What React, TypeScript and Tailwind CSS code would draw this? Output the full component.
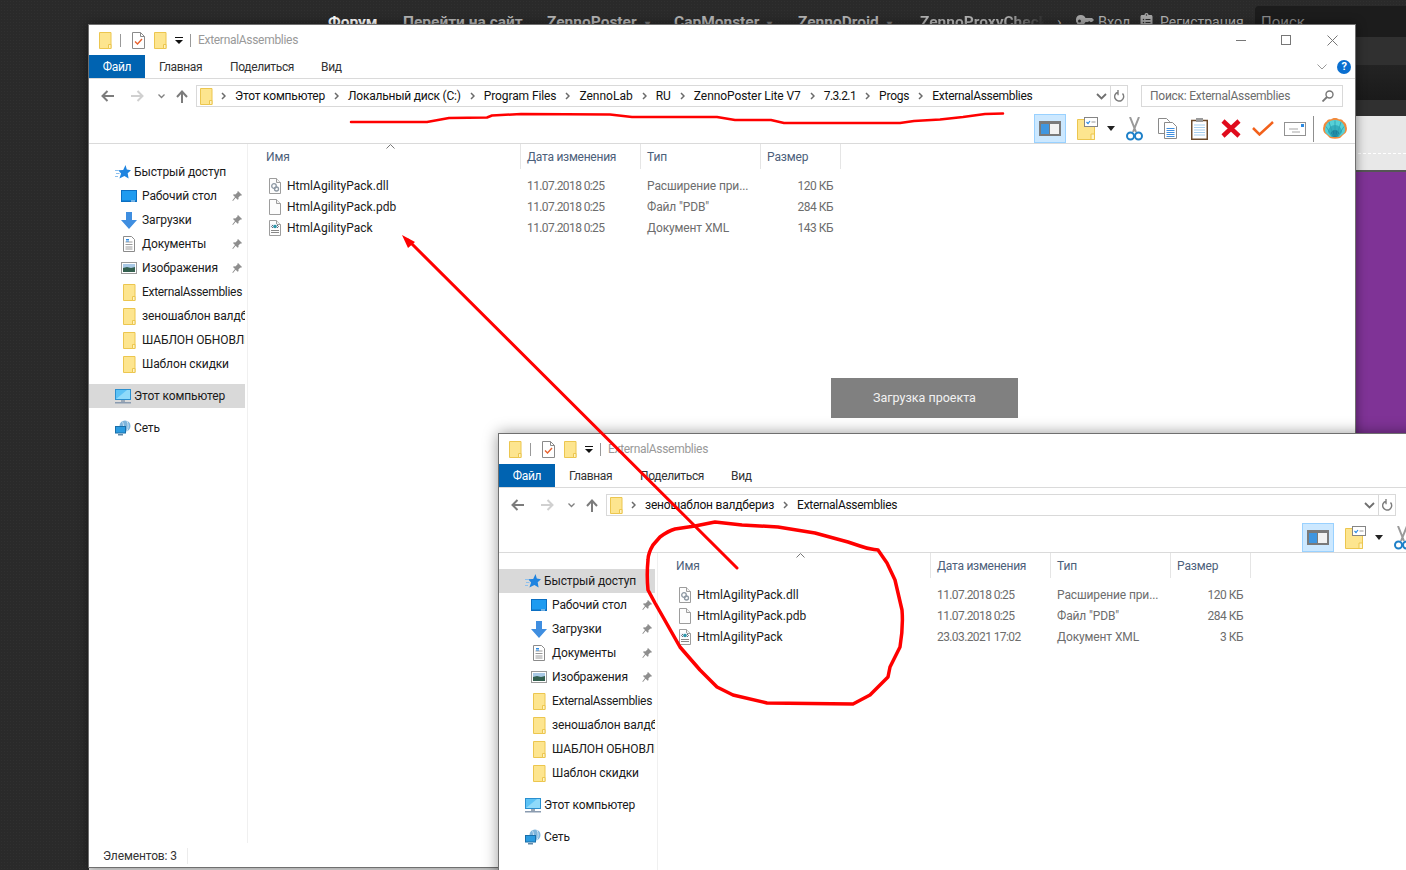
import { FaClipboardList } from "react-icons/fa";

type FileRow = { name: string; kind: "dll" | "pdb" | "xml"; date: string; type: string; size: string };

const filesOld: FileRow[] = [
  { name: "HtmlAgilityPack.dll", kind: "dll", date: "11.07.2018 0:25", type: "Расширение при...", size: "120 КБ" },
  { name: "HtmlAgilityPack.pdb", kind: "pdb", date: "11.07.2018 0:25", type: 'Файл "PDB"', size: "284 КБ" },
  { name: "HtmlAgilityPack", kind: "xml", date: "11.07.2018 0:25", type: "Документ XML", size: "143 КБ" },
];

const filesNew: FileRow[] = [
  { name: "HtmlAgilityPack.dll", kind: "dll", date: "11.07.2018 0:25", type: "Расширение при...", size: "120 КБ" },
  { name: "HtmlAgilityPack.pdb", kind: "pdb", date: "11.07.2018 0:25", type: 'Файл "PDB"', size: "284 КБ" },
  { name: "HtmlAgilityPack", kind: "xml", date: "23.03.2021 17:02", type: "Документ XML", size: "3 КБ" },
];

const crumbsOld = [
  { label: "Этот компьютер", cls: "tracking-[-0.2px]" },
  { label: "Локальный диск (C:)", cls: "tracking-[-0.22px]" },
  { label: "Program Files", cls: "tracking-[-0.1px]" },
  { label: "ZennoLab", cls: "tracking-[0px]" },
  { label: "RU", cls: "tracking-[0px]" },
  { label: "ZennoPoster Lite V7", cls: "tracking-[-0.08px]" },
  { label: "7.3.2.1", cls: "tracking-[-0.6px]" },
  { label: "Progs", cls: "tracking-[-0.2px]" },
  { label: "ExternalAssemblies", cls: "tracking-[-0.3px]" },
];

const crumbsNew = [
  { label: "зеношаблон валдбериз", cls: "tracking-[-0.2px]" },
  { label: "ExternalAssemblies", cls: "tracking-[-0.3px]" },
];

const siteNav = [
  { label: "Форум", cls: "w-[75px] text-white" },
  { label: "Перейти на сайт", cls: "w-[144px]" },
  { label: "ZennoPoster", cls: "w-[127px]", caret: true },
  { label: "CapMonster", cls: "w-[124px]", caret: true },
  { label: "ZennoDroid", cls: "w-[122px]", caret: true },
];

function FolderIcon({ className = "" }: { className?: string }) {
  return (
    <svg className={className} width="13" height="17" viewBox="0 0 13 17">
      <path d="M.5.5h11.500v16H.5z" fill="#fde58f" stroke="#ecc64f" />
      <path d="M9.500 12.500h2.500v4h-2.500z" fill="#fff3c4" stroke="#ecc64f" />
    </svg>
  );
}

function PropsIcon() {
  return (
    <svg width="13" height="17" viewBox="0 0 13 17">
      <path d="M.5.5h8l4 4v12H.5z" fill="#fff" stroke="#8a8a8a" />
      <path d="M8.500.5v4h4" fill="none" stroke="#8a8a8a" />
      <path d="M3 9.500l2.500 2.500L10 7" fill="none" stroke="#e8602c" strokeWidth="1.400" />
    </svg>
  );
}

function StarIcon() {
  return (
    <svg width="16" height="15" viewBox="0 0 16 15">
      <path d="M10.500 0l1.300 4.600 4.200.6-3.300 3 .9 5.300-4.200-2.600-5 2.600 1.700-5L3.200 5.200l5-.3z" fill="#1f84e0" />
      <path d="M0 5.500h3.500M1 8.500h3.500M0 11.500h3" stroke="#8cc0ee" strokeWidth="1" />
    </svg>
  );
}

function DesktopIcon() {
  return (
    <svg width="16" height="12" viewBox="0 0 16 12">
      <rect width="16" height="12" fill="#0b6fc2" />
      <rect x="1" y="1" width="14" height="9.500" fill="#1e9bf0" />
      <rect x="10" y="10.500" width="4" height="1" fill="#cfe8fb" />
    </svg>
  );
}

function DownloadIcon() {
  return (
    <svg width="16" height="17" viewBox="0 0 16 17">
      <path d="M5 0h6v8h5l-8 9-8-9h5z" fill="#3f8ee0" />
    </svg>
  );
}

function DocsIcon() {
  return (
    <svg width="12" height="16" viewBox="0 0 12 16">
      <path d="M.5.5h8l3 3v12H.5z" fill="#fff" stroke="#8b8b8b" />
      <path d="M2.500 6h7M2.500 8.500h7M2.500 11h7M2.500 13h7" stroke="#9a9a9a" />
      <path d="M3 3.500h3M3 5h3" stroke="#2b8ae2" />
    </svg>
  );
}

function PicturesIcon() {
  return (
    <svg width="16" height="12" viewBox="0 0 16 12">
      <rect x=".5" y=".5" width="15" height="11" fill="#fff" stroke="#9a9a9a" />
      <rect x="2" y="2" width="12" height="4" fill="#a9c9e6" />
      <path d="M2 6l4-1 4 1 4-1v5H2z" fill="#33604f" />
    </svg>
  );
}

function ComputerIcon() {
  return (
    <svg width="16" height="15" viewBox="0 0 16 15">
      <rect x=".5" y=".5" width="15" height="10" fill="#5cc2f5" stroke="#2a8fcf" />
      <path d="M1 10L12 1h3v9z" fill="#8fdafa" />
      <rect x="6" y="11" width="4" height="2" fill="#9aa7b5" />
      <rect y="13" width="16" height="1.500" fill="#8a9bb0" />
    </svg>
  );
}

function NetworkIcon() {
  return (
    <svg width="16" height="16" viewBox="0 0 16 16">
      <circle cx="10" cy="6" r="5.500" fill="#7eb5dc" />
      <path d="M7 1.500c2 2 2 7 0 9M12 1c1.500 3 1.500 7 0 10" stroke="#cfe4f4" fill="none" />
      <rect x=".5" y="6.500" width="10" height="6.500" fill="#2b9be0" stroke="#1a6ea8" />
      <rect x="3" y="14" width="5" height="1.500" fill="#5f88a8" />
    </svg>
  );
}

function PinIcon() {
  return (
    <svg width="10" height="11" viewBox="0 0 10 11">
      <path d="M6 0l4 4-1 .7-.6-.3L6.400 6.600 6.600 8 5.700 8.800 3.600 6.700 1 10 .3 9.400 3 6.100 1 4.100 1.900 3.300 3.300 3.500 5.500 1.500 5.400.8z" fill="#8e8e8e" />
    </svg>
  );
}

function KeyIcon() {
  return (
    <svg className="mt-[1px] shrink-0" width="18" height="12" viewBox="0 0 18 12">
      <path d="M5 0a5 5 0 1 0 4.500 7H12l1.200-1 1.200 1H16l2-2-2-2H9.500A5 5 0 0 0 5 0zM3.500 4.500a1.500 1.500 0 1 1 0 3 1.500 1.500 0 0 1 0-3z" fill="#a8a8a8" />
    </svg>
  );
}

function FileIcon({ kind }: { kind: FileRow["kind"] }) {
  return (
    <svg width="14" height="16" viewBox="0 0 14 16">
      <path d="M1.500.5h7l4 4v11h-11z" fill="#fdfdfd" stroke="#9d9d9d" />
      <path d="M8.500.5v4h4" fill="#f2f2f2" stroke="#9d9d9d" />
      {kind === "dll" && (
        <g fill="none" stroke="#8d98a3" strokeWidth="1.300">
          <circle cx="6" cy="8" r="2.300" />
          <circle cx="8.500" cy="11" r="2" />
        </g>
      )}
      {kind === "xml" && (
        <g>
          <path d="M2 4h7v4H2z" fill="#eef4fa" />
          <circle cx="7" cy="6.500" r="1.800" fill="#2b95a8" />
          <path d="M3.500 6.500L5 5M3.500 6.500L5 8M10.500 6.500L9 5M10.500 6.500L9 8" stroke="#667" />
          <path d="M3 10.500h8M3 12.500h8" stroke="#888" />
        </g>
      )}
    </svg>
  );
}

function BackArrow({ color, flip = false }: { color: string; flip?: boolean }) {
  return (
    <svg className={flip ? "rotate-180" : ""} width="13" height="12" viewBox="0 0 13 12">
      <path d="M13 6H2M6.500 1L1.500 6l5 5" fill="none" stroke={color} strokeWidth="2" />
    </svg>
  );
}

function Chevron() {
  return (
    <svg className="shrink-0" width="5" height="8" viewBox="0 0 5 8">
      <path d="M1 1l3 3-3 3" fill="none" stroke="#6b6b6b" strokeWidth="1.500" />
    </svg>
  );
}

function ToolbarIcons() {
  return (
    <div className="flex items-center h-full pt-[6px] pr-[8px]">
      <div className="flex items-center justify-center w-[32px] h-[29px] bg-[#cce8ff] border border-[#99d1ff]">
        <svg width="22" height="15" viewBox="0 0 22 15">
          <rect width="22" height="15" fill="#7a7a7a" />
          <rect x="2" y="3" width="8" height="10" fill="#3f96e0" />
          <rect x="11" y="3" width="9" height="10" fill="#f2f2f2" />
        </svg>
      </div>
      <svg className="ml-[11px]" width="21" height="23" viewBox="0 0 21 23">
        <path d="M.5 2.500h17v20H.5z" fill="#fde58f" stroke="#ecc64f" />
        <path d="M14 17h3.500v5.500H14z" fill="#fff3c4" stroke="#ecc64f" />
        <rect x="7.500" y=".5" width="13" height="9" fill="#fff" stroke="#858585" />
        <path d="M9.500 5l1.500 1.500L13 4" fill="none" stroke="#2b8ae2" strokeWidth="1.200" />
        <path d="M14.500 5h4" stroke="#999" />
      </svg>
      <svg className="ml-[9px]" width="8" height="5" viewBox="0 0 8 5">
        <path d="M0 0h8L4 5z" fill="#222" />
      </svg>
      <svg className="ml-[11px]" width="17" height="24" viewBox="0 0 17 24">
        <path d="M4 0l6 15M13 0L7 15" stroke="#9a9a9a" strokeWidth="2" fill="none" />
        <circle cx="4.500" cy="19" r="3.500" fill="none" stroke="#1e80c8" strokeWidth="2" />
        <circle cx="12.500" cy="19" r="3.500" fill="none" stroke="#1e80c8" strokeWidth="2" />
      </svg>
      <svg className="ml-[15px]" width="19" height="21" viewBox="0 0 19 21">
        <path d="M.5.5h8l3 3v12H.5z" fill="#fff" stroke="#8a8a8a" />
        <path d="M6.500 4.500h8l4 4v12h-12z" fill="#fff" stroke="#8a8a8a" />
        <path d="M8.500 10.500h8M8.500 12.500h8M8.500 14.500h8M8.500 16.500h8M8.500 18.500h8" stroke="#3f8fe0" />
      </svg>
      <svg className="ml-[14px]" width="17" height="22" viewBox="0 0 17 22">
        <rect x=".75" y="2.500" width="15.500" height="18.750" fill="#fff" stroke="#6b4a2b" strokeWidth="1.500" />
        <rect x="5" y="0" width="7" height="4" fill="#9a9a9a" />
        <path d="M3 7h11M3 9.500h11M3 12h11M3 14.500h11M3 17h11" stroke="#a6cfee" />
      </svg>
      <svg className="ml-[13px]" width="20" height="19" viewBox="0 0 20 19">
        <path d="M2 2l16 15M18 2L2 17" stroke="#e00b1c" strokeWidth="4.500" />
      </svg>
      <svg className="ml-[11px]" width="22" height="15" viewBox="0 0 22 15">
        <path d="M1 7l6.500 6.500L21 1" fill="none" stroke="#f2611b" strokeWidth="2.500" />
      </svg>
      <svg className="ml-[10px]" width="22" height="14" viewBox="0 0 22 14">
        <rect x=".5" y=".5" width="21" height="13" fill="#fff" stroke="#929292" />
        <rect x="17" y="2" width="3" height="3" fill="#2b8ae2" />
        <path d="M5 7h9M8 10h8" stroke="#a5a5a5" />
      </svg>
      <div className="ml-[7px] w-px h-[26px] bg-[#8f8f8f]" />
      <svg className="ml-[9px]" width="24" height="21" viewBox="0 0 24 21">
        <path d="M12 0c-2 0-3 .5-4 1.500C6 1 4.500 2 3.500 3.500 1.500 4.500.5 6.500.5 8.500-.3 10.500 0 13 1.500 15L4 17l3 3c3 1 7 1 10 0l3-3 2.500-2c1.500-2 1.800-4.500 1-6.500 0-2-1-4-3-5C19.500 2 18 1 16 1.500 15 .5 14 0 12 0z" fill="#f08a3c" />
        <path d="M12 2C6 2 2 6 2 12c0 2 1 3 2 4l4 3h8l4-3c1-1 2-2 2-4 0-6-4-10-10-10z" fill="#56d0d6" />
        <path d="M12 7c-3.500 0-7 3-7 7l3.500 5h7l3.500-5c0-4-3.500-7-7-7z" fill="#35aebd" />
        <path d="M12 12c-2 0-4 1.500-4 3l2 4h4l2-4c0-1.500-2-3-4-3z" fill="#1c7f9d" />
        <path d="M12 18.500V2.500M10.500 18.500L6 4M13.500 18.500L18 4M9 18L3 8.500M15 18L21 8.500" stroke="#2a9fb0" strokeWidth=".8" />
      </svg>
    </div>
  );
}

function NavRow({
  icon,
  label,
  quick = false,
  pin = false,
  active = false,
}: {
  icon: React.ReactNode;
  label: string;
  quick?: boolean;
  pin?: boolean;
  active?: boolean;
}) {
  return (
    <div
      className={`flex items-center h-[24px] w-[156px] whitespace-nowrap overflow-hidden text-[#1a1a1a] ${
        active ? "bg-[#d9d9d9]" : ""
      } ${quick ? "pl-[26px]" : "pl-[32px]"}`}
    >
      <span className={`flex items-center justify-center shrink-0 w-[16px] ${quick ? "mr-[3px]" : "mr-[5px]"}`}>{icon}</span>
      <span className={label === "ExternalAssemblies" ? "tracking-[-0.3px]" : ""}>{label}</span>
      {pin && (
        <span className="ml-auto mr-[3px]">
          <PinIcon />
        </span>
      )}
    </div>
  );
}

function Explorer({
  className,
  crumbs,
  files,
  activeRow,
  status,
}: {
  className: string;
  crumbs: { label: string; cls: string }[];
  files: FileRow[];
  activeRow: "quick" | "pc";
  status?: string;
}) {
  return (
    <div className={`absolute flex flex-col bg-white border border-[#6f6f6f] text-[12px] leading-none tracking-[-0.12px] ${className}`}>
      {/* title bar */}
      <div className="flex items-center h-[30px] shrink-0 pl-[10px]">
        <FolderIcon />
        <div className="w-px h-[13px] bg-[#999] ml-[8px] mr-[11px]" />
        <PropsIcon />
        <FolderIcon className="ml-[9px]" />
        <svg className="ml-[8px]" width="8" height="7" viewBox="0 0 8 7">
          <path d="M0 .5h8" stroke="#111" />
          <path d="M0 3h8L4 7z" fill="#111" />
        </svg>
        <div className="w-px h-[13px] bg-[#999] ml-[7px] mr-[7px]" />
        <span className="text-[#999] tracking-[-0.3px]">ExternalAssemblies</span>
        <div className="ml-auto flex items-center pr-[17px]">
          <div className="w-[10px] h-px bg-[#777]" />
          <div className="w-[10px] h-[10px] border border-[#777] ml-[35px]" />
          <svg className="ml-[36px]" width="11" height="11" viewBox="0 0 11 11">
            <path d="M.5.5l10 10M10.500.5l-10 10" stroke="#777" />
          </svg>
        </div>
      </div>
      {/* ribbon tabs */}
      <div className="flex items-stretch h-[24px] shrink-0 border-b border-[#dadada] text-[#333] tracking-[-0.35px]">
        <div className="flex items-center justify-center w-[56px] bg-[#0063b1] text-white">Файл</div>
        <div className="flex items-center ml-[14px] w-[71px]">Главная</div>
        <div className="flex items-center w-[91px]">Поделиться</div>
        <div className="flex items-center">Вид</div>
        <div className="ml-auto flex items-center pr-[4px]">
          <svg width="10" height="6" viewBox="0 0 10 6">
            <path d="M.5.5L5 5 9.500.5" fill="none" stroke="#999" />
          </svg>
          <div className="flex items-center justify-center w-[14px] h-[14px] rounded-full bg-[#0a6fd0] text-white font-bold ml-[10px] text-[11px]">?</div>
        </div>
      </div>
      {/* address row */}
      <div className="flex items-start h-[29px] shrink-0 pt-[6px] pl-[12px] pr-[12px]">
        <div className="flex items-center h-[22px]">
          <BackArrow color="#7c7c7c" />
          <span className="ml-[17px]">
            <BackArrow color="#d0d0d0" flip />
          </span>
          <svg className="ml-[14px]" width="7" height="5" viewBox="0 0 7 5">
            <path d="M.5.5l3 3 3-3" fill="none" stroke="#808080" strokeWidth="1.300" />
          </svg>
          <svg className="ml-[11px] mr-[8px]" width="12" height="13" viewBox="0 0 12 13">
            <path d="M6 13V2M1 7l5-5.500L11 7" fill="none" stroke="#7c7c7c" strokeWidth="2" />
          </svg>
        </div>
        <div className="flex items-stretch flex-1 min-w-0 h-[22px] border border-[#d9d9d9]">
          <div className="flex items-center flex-1 min-w-0 pl-[3px] text-[#111] whitespace-nowrap overflow-hidden">
            <FolderIcon className="mr-[8px]" />
            {crumbs.map((crumb) => (
              <span key={crumb.label} className="flex items-center">
                <Chevron />
                <span className={`ml-[9px] mr-[9px] ${crumb.cls}`}>{crumb.label}</span>
              </span>
            ))}
            <svg className="ml-auto mr-[3px] shrink-0" width="11" height="7" viewBox="0 0 11 7">
              <path d="M1 1l4.500 4.500L10 1" fill="none" stroke="#6f6f6f" strokeWidth="1.800" />
            </svg>
          </div>
          <div className="flex items-center justify-center w-[17px] border-l border-[#d9d9d9]">
            <svg width="11" height="12" viewBox="0 0 11 12">
              <path d="M8.500 3.500A4.500 4.500 0 1 1 4 2.200M4 0v4.500h-.5" fill="none" stroke="#7c7c7c" strokeWidth="1.400" />
            </svg>
          </div>
        </div>
        <div className="flex items-center shrink-0 w-[202px] h-[22px] ml-[13px] border border-[#d9d9d9] pl-[8px] pr-[8px] text-[#6d6d6d] tracking-[-0.25px]">
          <span>Поиск: ExternalAssemblies</span>
          <svg className="ml-auto" width="12" height="12" viewBox="0 0 12 12">
            <circle cx="7.500" cy="4.500" r="3.500" fill="none" stroke="#777" strokeWidth="1.400" />
            <path d="M5 7l-4.500 4.500" stroke="#777" strokeWidth="1.800" />
          </svg>
        </div>
      </div>
      {/* command bar */}
      <div className="flex justify-end h-[36px] shrink-0 border-b border-[#dadada]">
        <ToolbarIcons />
      </div>
      {/* body */}
      <div className="flex flex-1 min-h-0">
        <div className="w-[159px] shrink-0 border-r border-[#f0f0f0] pt-[16px]">
          <NavRow quick active={activeRow === "quick"} icon={<StarIcon />} label="Быстрый доступ" />
          <NavRow pin icon={<DesktopIcon />} label="Рабочий стол" />
          <NavRow pin icon={<DownloadIcon />} label="Загрузки" />
          <NavRow pin icon={<DocsIcon />} label="Документы" />
          <NavRow pin icon={<PicturesIcon />} label="Изображения" />
          <NavRow icon={<FolderIcon />} label="ExternalAssemblies" />
          <NavRow icon={<FolderIcon />} label="зеношаблон валдбериз" />
          <NavRow icon={<FolderIcon />} label="ШАБЛОН ОБНОВЛЕНИЕ" />
          <NavRow icon={<FolderIcon />} label="Шаблон скидки" />
          <div className="h-[8px]" />
          <NavRow quick active={activeRow === "pc"} icon={<ComputerIcon />} label="Этот компьютер" />
          <div className="h-[8px]" />
          <NavRow quick icon={<NetworkIcon />} label="Сеть" />
        </div>
        <div className="flex-1 min-w-0">
          <div className="grid grid-cols-[273px_120px_120px_80px] h-[25px] text-[#4c607a]">
            <div className="relative flex items-center pl-[18px] border-r border-[#e5e5e5]">
              Имя
              <svg className="absolute left-[138px] top-0" width="9" height="5" viewBox="0 0 9 5">
                <path d="M.5 4.500l4-4 4 4" fill="none" stroke="#777" />
              </svg>
            </div>
            <div className="flex items-center pl-[6px] border-r border-[#e5e5e5] tracking-[-0.25px]">Дата изменения</div>
            <div className="flex items-center pl-[6px] border-r border-[#e5e5e5]">Тип</div>
            <div className="flex items-center pl-[6px] border-r border-[#e5e5e5]">Размер</div>
          </div>
          <div className="mt-[6px]">
            {files.map((file) => (
              <div key={file.name} className="grid grid-cols-[273px_120px_120px_80px] h-[21px] items-center text-[#6d6d6d]">
                <div className="flex items-center pl-[20px] text-[#1a1a1a] tracking-[0.03px]">
                  <FileIcon kind={file.kind} />
                  <span className="ml-[5px]">{file.name}</span>
                </div>
                <div className="pl-[6px] tracking-[-0.6px]">{file.date}</div>
                <div className="pl-[6px]">{file.type}</div>
                <div className="text-right pr-[8px] tracking-[-0.5px]">{file.size}</div>
              </div>
            ))}
          </div>
        </div>
      </div>
      {status && (
        <div className="flex items-center h-[24px] shrink-0 pl-[14px] pt-[2px] text-[#333]">
          <span>{status}</span>
          <div className="w-px h-[16px] bg-[#ececec] ml-[10px]" />
        </div>
      )}
    </div>
  );
}

export default function App() {
  return (
    <div className="relative w-[1406px] h-[870px] overflow-hidden bg-[#2a2a2a] bg-[radial-gradient(#303030_1px,transparent_1px)] bg-[length:3px_3px] [font-family:Roboto,sans-serif]">
      {/* forum page behind the windows */}
      <div className="flex flex-col pl-[89px] h-full">
        <div className="flex h-[37px] shrink-0 pl-[239px]">
          <div className="flex items-start pt-[14px] text-[15.5px] font-bold leading-[17px] text-[#b4b4b4] whitespace-nowrap">
            {siteNav.map((item) => (
              <span key={item.label} className={item.cls}>
                {item.label}
                {item.caret && <span className="text-[#777] text-[10px] ml-[8px]">▾</span>}
              </span>
            ))}
            <span className="w-[125px] mr-[12px] overflow-hidden bg-gradient-to-r from-[#b4b4b4] from-70% to-transparent bg-clip-text text-transparent">ZennoProxyChecker</span>
            <span className="font-normal w-[19px]">›</span>
            <KeyIcon />
            <span className="font-normal ml-[4px] w-[42px] text-[14.5px]">Вход</span>
            <FaClipboardList className="mt-[-1px] w-[13px] text-[#a8a8a8]" size={16} />
            <span className="font-normal ml-[7px] w-[95px] text-[14px]">Регистрация</span>
          </div>
          <div className="ml-auto flex items-start w-[151px] h-[31px] mt-[6px] bg-[#1c1c1c] rounded-tl-[4px] pl-[6px] pt-[5px] text-[15px] text-[#8a8a8a]">Поиск</div>
        </div>
        <div className="h-[28px] shrink-0 bg-[#303030]" />
        <div className="h-[35px] shrink-0 bg-gradient-to-b from-[#232323] to-[#1a1a1a]" />
        <div className="h-[16px] shrink-0 bg-[#303030]" />
        <div className="flex items-end h-[54px] shrink-0 bg-[#e8e8e8] pb-[16px]">
          <div className="w-full border-t border-dashed border-white" />
        </div>
        <div className="h-[2px] shrink-0 bg-[#555]" />
        <div className="h-[261px] shrink-0 bg-[#7f3396]" />
        <div className="flex-1 bg-[#e6e6e6]" />
      </div>

      <Explorer
        className="left-[88px] top-[24px] w-[1268px] h-[844px] shadow-[0_0_10px_rgba(0,0,0,0.45)]"
        crumbs={crumbsOld}
        files={filesOld}
        activeRow="pc"
        status="Элементов: 3"
      />

      <div className="absolute left-[831px] top-[378px] flex items-center justify-center w-[187px] h-[40px] pt-[1px] bg-[#808080] text-[12.5px] text-[#f2f2f2]">
        Загрузка проекта
      </div>

      <Explorer
        className="left-[498px] top-[433px] w-[1126px] h-[500px] shadow-[0_0_14px_rgba(0,0,0,0.4)]"
        crumbs={crumbsNew}
        files={filesNew}
        activeRow="quick"
      />

      {/* hand-drawn red marks */}
      <svg className="absolute inset-0 pointer-events-none" width="1406" height="870" viewBox="0 0 1406 870" fill="none">
        <path
          d="M351 122L427 122L449 118L487 117.500L492 115.500L521 114L610 114.500L632 117L717 117L735 120L771 120L784 123L900 123L914 121L940 119.500L963 117L985 114L1003 113.500"
          stroke="#ff0000"
          strokeWidth="2.500"
          strokeLinejoin="round"
          strokeLinecap="round"
        />
        <path d="M737 568L408 240" stroke="#ff0000" strokeWidth="3" strokeLinecap="round" />
        <path d="M402 235L415 242L408 248z" fill="#ff0000" />
        <path
          d="M878 550C872 549 868 549 860 546L848 542L815 533L778 527L742 525L715 522L695 526L675 529C668 531 664 534 660 537L653 545C650 550 648 555 648 560C647 570 647 580 648 590L655 603L663 617L680 647L700 670L717 687L733 695L767 703L853 704L870 695L888 677L890 667L900 647C902 635 903 622 902 610L895 580L887 563L878 550"
          stroke="#ff0000"
          strokeWidth="3.500"
          strokeLinejoin="round"
          strokeLinecap="round"
        />
      </svg>
    </div>
  );
}
